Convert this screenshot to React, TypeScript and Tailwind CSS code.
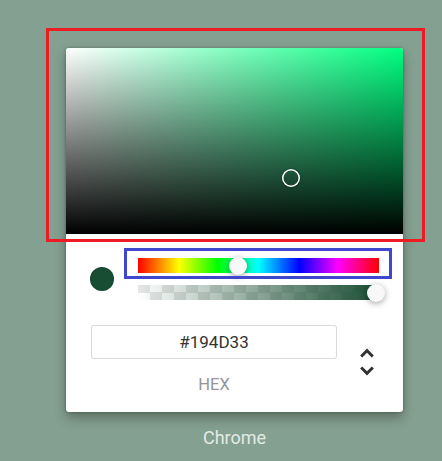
import React from "react";

const HEX = "#194D33";

export default function App() {
  return (
    <div className="relative min-h-[461px] w-[442px] overflow-hidden bg-[#84a090] pl-[66px] pt-[48px] font-[Roboto,sans-serif]">
      <div className="w-[337px]">
        {/* picker card */}
        <div className="rounded-[3px] bg-white shadow-[0_0_3px_rgba(0,0,0,0.3),0_6px_12px_rgba(0,0,0,0.3)]">
          {/* saturation */}
          <div className="relative h-[186px] overflow-hidden rounded-t-[3px] bg-[#00ff80]">
            <div className="h-full w-full bg-[linear-gradient(to_right,#fff,rgba(255,255,255,0))]">
              <div className="h-full w-full bg-[linear-gradient(to_top,#000,rgba(0,0,0,0))]" />
            </div>
            <div className="absolute left-[216px] top-[121px] h-[18px] w-[18px] rounded-full shadow-[inset_0_0_0_1.5px_#fff,0_0_1px_1px_rgba(0,0,0,0.2)]" />
          </div>

          {/* body */}
          <div className="px-[24px] pb-[18px] pt-[24px]">
            <div className="flex">
              <div className="w-[48px]">
                <div className="mt-[9px] h-[24px] w-[24px] rounded-full bg-[#194D33] shadow-[inset_0_0_0_1px_rgba(0,0,0,0.1)]" />
              </div>
              <div className="flex-1">
                <div className="relative h-[15px] bg-[linear-gradient(to_right,#f00_0%,#ff0_17%,#0f0_33%,#0ff_50%,#00f_67%,#f0f_83%,#f00_100%)]">
                  <div className="absolute left-[91px] top-[-1.5px] h-[18px] w-[18px] rounded-full bg-[#f8f8f8] shadow-[0_1.5px_6px_rgba(0,0,0,0.37)]" />
                </div>
                <div className="relative mt-[12px] h-[15px] bg-[conic-gradient(#fff_25%,#e6e6e6_0_50%,#fff_0_75%,#e6e6e6_0)] bg-size-[24px_15px]">
                  <div className="h-full w-full bg-[linear-gradient(to_right,rgba(25,77,51,0),rgb(25,77,51))]" />
                  <div className="absolute right-[-6px] top-[-1.5px] h-[18px] w-[18px] rounded-full bg-[#f8f8f8] shadow-[0_1.5px_6px_rgba(0,0,0,0.37)]" />
                </div>
              </div>
            </div>

            <div className="flex pt-[25px]">
              <div className="flex flex-1 flex-col items-center pl-[1px]">
                <input
                  value={HEX}
                  readOnly
                  className="h-[34px] w-full rounded-[3px] bg-white text-center text-[17px] text-[#333] shadow-[inset_0_0_0_1px_#dadada] outline-none"
                />
                <span className="mt-[18px] block text-center text-[16.5px] leading-[16.5px] text-[#969696]">
                  HEX
                </span>
              </div>
              <div className="mt-[19px] w-[42px] shrink-0 pl-[12px]">
                <svg viewBox="0 0 24 24" width="36" height="36" className="overflow-visible">
                  <path
                    fill="#333"
                    d="M12,5.83L15.17,9L16.58,7.59L12,3L7.41,7.59L8.83,9L12,5.83Z M12,18.17L8.83,15L7.42,16.41L12,21L16.59,16.41L15.17,15L12,18.17Z"
                  />
                </svg>
              </div>
            </div>
          </div>
        </div>

        <p className="mt-[12px] text-center text-[18px] leading-[27px] text-[#e2eae5]">
          Chrome
        </p>
      </div>

      {/* annotation boxes */}
      <div className="absolute left-[46px] top-[28px] h-[214px] w-[379px] border-[3px] border-[#ed1c24]" />
      <div className="absolute left-[124px] top-[248px] h-[31px] w-[268px] border-[3px] border-[#3f48cc]" />
    </div>
  );
}
